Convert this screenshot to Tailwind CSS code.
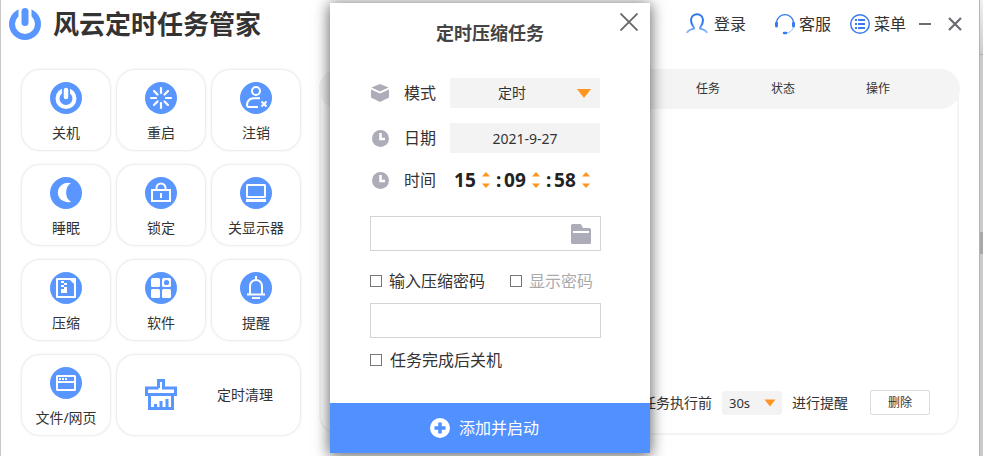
<!DOCTYPE html>
<html lang="zh-CN">
    <head>
        <meta charset="UTF-8">
        <meta name="viewport" content="width=device-width, initial-scale=1.0">
        <title>风云定时任务管家</title>
        <script src="https://cdn.jsdelivr.net/npm/@tailwindcss/browser@4"></script>
    </head>
    <body class="flex min-h-screen bg-white font-['Noto_Sans','Noto_Sans_CJK_SC',sans-serif] text-[#333]">
        <!-- Ventana principal -->
        <div class="relative flex flex-1 flex-col border-l border-[#c8c8c8] pb-[21px]">
            <header class="mb-[21px] flex h-12 items-center pl-2 pr-[17px]">
                <svg class="h-8 w-8" viewBox="0 0 32 32" fill="none">
                    <circle cx="16" cy="16" r="13" stroke="#5a96ff" stroke-width="6"></circle>
                    <path d="M9.500 0H22.500V9H9.500Z" fill="white"></path>
                    <path d="M16 3.500V14.500" stroke="#5a96ff" stroke-width="7" stroke-linecap="round"></path>
                </svg>
                <h1 class="ml-3 text-[26px] leading-8 font-bold">风云定时任务管家</h1>
                <nav class="ml-auto flex items-center text-base leading-6">
                    <a href="#" class="flex items-center gap-1.5">
                        <svg class="h-[22px] w-[22px]" viewBox="0 0 22 22" fill="none" stroke-width="2">
                            <path d="M1 20C2 17 5 16.500 8 15.500C8.500 14 5 12.500 5 7A6 5.800 0 0 1 17 7C17 12.500 13.500 14 14 15.500C17 16.500 20 17 21 20" stroke="url(#user-grad)"></path>
                            <defs>
                                <linearGradient id="user-grad" x1="0" y1="10" x2="0" y2="21" gradientUnits="userSpaceOnUse">
                                    <stop stop-color="#2f76ee"></stop>
                                    <stop offset="1" stop-color="#a5c8ff"></stop>
                                </linearGradient>
                            </defs>
                        </svg>
                        登录
                    </a>
                    <a href="#" class="ml-7 flex items-center gap-[3px]">
                        <svg class="h-[22px] w-[22px]" viewBox="0 0 22 22" fill="none" stroke="#3a7cf0">
                            <path d="M2.500 9A8.600 8.600 0 0 1 19.500 9" stroke-width="1.200"></path>
                            <path d="M2.500 10V13M19.500 10V13" stroke-width="3" stroke-linecap="round"></path>
                            <path d="M19.500 14C18.500 17.500 15.500 20 12 20" stroke="#8db5fa"></path>
                            <path d="M10 20H12" stroke-width="2.500" stroke-linecap="round"></path>
                        </svg>
                        客服
                    </a>
                    <a href="#" class="ml-[18px] flex items-center gap-[3px]">
                        <svg class="h-[22px] w-[22px]" viewBox="0 0 22 22" fill="none" stroke="#3a7cf0">
                            <circle cx="11" cy="11" r="9.300" stroke-width="1.500"></circle>
                            <path d="M6 7H8M6 11H8M6 15H8M9 7H16M9 11H16M9 15H16" stroke-width="2"></path>
                        </svg>
                        菜单
                    </a>
                    <button aria-label="最小化" class="ml-3">
                        <svg class="h-3.5 w-3.5" viewBox="0 0 14 14" stroke="#6f6875" stroke-width="2">
                            <path d="M1 7H13"></path>
                        </svg>
                    </button>
                    <button aria-label="关闭" class="ml-4">
                        <svg class="h-3.5 w-3.5" viewBox="0 0 14 14" stroke="#6f6875" stroke-width="2.200">
                            <path d="M1 1L13 13M13 1L1 13"></path>
                        </svg>
                    </button>
                </nav>
            </header>
            <main class="flex flex-1 pr-[19px] pl-[21px]">
                <!-- Botones de tareas -->
                <div class="grid w-[278px] shrink-0 auto-rows-[80px] grid-cols-3 gap-x-[7px] gap-y-[15px] pt-px text-sm leading-5">
                    <button class="flex flex-col items-center rounded-[18px] pt-3 shadow-[0_0_3px_#cfcfcf]">
                        <svg class="mb-[9px] h-8 w-8" viewBox="0 0 32 32" fill="none">
                            <circle cx="16" cy="16" r="16" fill="#5a96ff"></circle>
                            <circle cx="16" cy="16.500" r="8.500" stroke="white" stroke-width="4"></circle>
                            <path d="M12 4H20V12H12Z" fill="#5a96ff"></path>
                            <path d="M16 8V15" stroke="white" stroke-width="4.500" stroke-linecap="round"></path>
                        </svg>
                        关机
                    </button>
                    <button class="flex flex-col items-center rounded-[18px] pt-3 shadow-[0_0_3px_#cfcfcf]">
                        <svg class="mb-[9px] h-8 w-8" viewBox="0 0 32 32" fill="none">
                            <circle cx="16" cy="16" r="16" fill="#5a96ff"></circle>
                            <path d="M16 6V11M16 21V26M6 16H11M21 16H26M9 9L12.500 12.500M19.500 19.500L23 23M23 9L19.500 12.500M12.500 19.500L9 23" stroke="white" stroke-width="2.200" stroke-linecap="round"></path>
                        </svg>
                        重启
                    </button>
                    <button class="flex flex-col items-center rounded-[18px] pt-3 shadow-[0_0_3px_#cfcfcf]">
                        <svg class="mb-[9px] h-8 w-8" viewBox="0 0 32 32" fill="none" stroke="white" stroke-width="2">
                            <circle cx="16" cy="16" r="16" fill="#5a96ff" stroke="none"></circle>
                            <circle cx="16" cy="9" r="4"></circle>
                            <path d="M20 16.200H13.500C9.500 16.200 7 19.500 7 23C7 24.500 7.500 25 9 25H18"></path>
                            <path d="M21.500 19.500L26.500 24.500M26.500 19.500L21.500 24.500"></path>
                        </svg>
                        注销
                    </button>
                    <button class="flex flex-col items-center rounded-[18px] pt-3 shadow-[0_0_3px_#cfcfcf]">
                        <svg class="mb-[9px] h-8 w-8" viewBox="0 0 32 32">
                            <circle cx="16" cy="16" r="16" fill="#5a96ff"></circle>
                            <path d="M21 6.300A10 9.700 0 1 0 21 24.700C14.500 21.500 14.500 9.500 21 6.300Z" fill="white"></path>
                        </svg>
                        睡眠
                    </button>
                    <button class="flex flex-col items-center rounded-[18px] pt-3 shadow-[0_0_3px_#cfcfcf]">
                        <svg class="mb-[9px] h-8 w-8" viewBox="0 0 32 32" fill="none" stroke="white" stroke-width="2">
                            <circle cx="16" cy="16" r="16" fill="#5a96ff" stroke="none"></circle>
                            <rect x="7" y="13" width="18" height="11"></rect>
                            <path d="M11.500 13V11A4.500 4.500 0 0 1 20.500 11V13M16 16V21"></path>
                        </svg>
                        锁定
                    </button>
                    <button class="flex flex-col items-center rounded-[18px] pt-3 shadow-[0_0_3px_#cfcfcf]">
                        <svg class="mb-[9px] h-8 w-8" viewBox="0 0 32 32" fill="none" stroke="white" stroke-width="2">
                            <circle cx="16" cy="16" r="16" fill="#5a96ff" stroke="none"></circle>
                            <rect x="7" y="8" width="18" height="12" rx="0.500"></rect>
                            <path d="M6 23.500H26" stroke-width="3"></path>
                        </svg>
                        关显示器
                    </button>
                    <button class="flex flex-col items-center rounded-[18px] pt-3 shadow-[0_0_3px_#cfcfcf]">
                        <svg class="mb-[9px] h-8 w-8" viewBox="0 0 32 32" fill="none">
                            <circle cx="16" cy="16" r="16" fill="#5a96ff"></circle>
                            <path d="M7 7H25V25H7Z" stroke="white" stroke-width="2" stroke-linejoin="round"></path>
                            <path d="M19 7H25V13Z" fill="white"></path>
                            <path d="M11 9H14V11H11ZM14 11H17V13H14ZM11 13H14V15H11ZM14 15H17V21H11V17H14Z" fill="white"></path>
                        </svg>
                        压缩
                    </button>
                    <button class="flex flex-col items-center rounded-[18px] pt-3 shadow-[0_0_3px_#cfcfcf]">
                        <svg class="mb-[9px] h-8 w-8" viewBox="0 0 32 32" fill="white">
                            <circle cx="16" cy="16" r="16" fill="#5a96ff"></circle>
                            <rect x="6" y="6" width="9" height="9" rx="1.500"></rect>
                            <rect x="6" y="17" width="9" height="9" rx="1.500"></rect>
                            <rect x="17" y="17" width="9" height="9" rx="1.500"></rect>
                            <rect x="17" y="6" width="9" height="9" rx="1.500"></rect>
                            <circle cx="21.500" cy="10.500" r="2.600" fill="#5a96ff"></circle>
                        </svg>
                        软件
                    </button>
                    <button class="flex flex-col items-center rounded-[18px] pt-3 shadow-[0_0_3px_#cfcfcf]">
                        <svg class="mb-[9px] h-8 w-8" viewBox="0 0 32 32" fill="none" stroke="white" stroke-width="2">
                            <circle cx="16" cy="16" r="16" fill="#5a96ff" stroke="none"></circle>
                            <path d="M10 22V14A6 6 0 0 1 22 14V22M16 4V8M7 22.500H25M12 26H20"></path>
                        </svg>
                        提醒
                    </button>
                    <button class="flex flex-col items-center rounded-[18px] pt-3 shadow-[0_0_3px_#cfcfcf]">
                        <svg class="mb-[9px] h-8 w-8" viewBox="0 0 32 32" fill="none" stroke="white" stroke-width="2">
                            <circle cx="16" cy="16" r="16" fill="#5a96ff" stroke="none"></circle>
                            <rect x="7" y="9" width="18" height="14" rx="0.500"></rect>
                            <path d="M7 15H25"></path>
                            <path d="M9 12H17" stroke-dasharray="2 1"></path>
                        </svg>
                        文件/网页
                    </button>
                    <button class="col-span-2 flex items-center rounded-[18px] pl-7 shadow-[0_0_3px_#cfcfcf]">
                        <svg class="h-8 w-8" viewBox="0 0 32 32" fill="none" stroke="#5a96ff" stroke-width="3">
                            <path d="M13.500 9V1.500H18.500V9H30.500V15.500H1.500V9H13.500"></path>
                            <path d="M4.500 15.500V29.500H27.500V15.500M10.500 29V25M16 29V22M22 29V20"></path>
                        </svg>
                        <span class="ml-10">定时清理</span>
                    </button>
                </div>
                <!-- Lista de tareas -->
                <section class="ml-[19px] flex flex-1 flex-col">
                    <div class="relative rounded-[20px] bg-[#f4f4f4]">
                        <table class="h-10 w-full table-fixed text-left text-xs">
                            <thead>
                                <tr>
                                    <td></td>
                                    <th class="w-[75px] font-normal">任务</th>
                                    <th class="w-[95px] font-normal">状态</th>
                                    <th class="w-[94px] font-normal">操作</th>
                                </tr>
                            </thead>
                        </table>
                    </div>
                    <div class="mr-px -mt-10 flex flex-1 items-end justify-end rounded-[20px] border-2 border-[#f4f4f4] pr-[27px] pb-[18px]">
                        <div class="flex items-center text-sm leading-6">
                            <label for="remind">任务执行前</label>
                            <div class="relative mx-2.5">
                                <select id="remind" class="block h-6 w-[60px] appearance-none rounded-[3px] bg-[#f3f3f3] pl-[7px] text-[13px] leading-6">
                                    <option>30s</option>
                                    <option>60s</option>
                                </select>
                                <svg class="pointer-events-none absolute top-2 right-1.5 h-2 w-3" viewBox="0 0 12 8">
                                    <path d="M0.500 0.500H11.500L6 7.500Z" fill="#ff9420"></path>
                                </svg>
                            </div>
                            <span>进行提醒</span>
                            <button class="ml-[22px] h-[25px] w-[60px] rounded-xs border border-[#dcdcdc] text-xs">删除</button>
                        </div>
                    </div>
                </section>
            </main>

            <!-- Diálogo de compresión -->
            <div role="dialog" aria-labelledby="dialog-title" class="absolute top-[3px] left-1/2 w-80 -translate-x-1/2 bg-white shadow-[0_2px_14px_1px_#00000099]">
                <button aria-label="关闭" class="absolute top-2.5 right-3">
                    <svg class="h-[18px] w-[18px]" viewBox="0 0 18 18" stroke="#666" stroke-width="1.800">
                        <path d="M0.500 0.500L17.500 17.500M17.500 0.500L0.500 17.500"></path>
                    </svg>
                </button>
                <h2 id="dialog-title" class="pt-4 text-center text-lg leading-7 font-bold text-[#444]">定时压缩任务</h2>
                <form class="px-10 pt-[31px] text-base leading-6">
                    <div class="flex items-center">
                        <svg class="h-5 w-5" viewBox="0 0 20 20" fill="#adacb9">
                            <path d="M10 1L18.500 4.500L10 8.500L1.500 4.500Z"></path>
                            <path d="M1 6.500L10 10.500L19 6.500V14.500L10 19L1 14.500Z"></path>
                        </svg>
                        <label for="mode" class="ml-3.5">模式</label>
                        <div class="relative ml-3.5">
                            <select id="mode" class="block h-[30px] w-[150px] appearance-none bg-[#f3f3f3] pr-[26px] text-center text-sm">
                                <option>定时</option>
                                <option>每天</option>
                            </select>
                            <svg class="pointer-events-none absolute top-[11px] right-[9px] h-[9px] w-3.5" viewBox="0 0 14 9">
                                <path d="M0 0H14L7 9Z" fill="#ff9420"></path>
                            </svg>
                        </div>
                    </div>
                    <div class="mt-[15px] flex items-center">
                        <svg class="h-5 w-5" viewBox="0 0 20 20">
                            <circle cx="10.500" cy="10.500" r="8.500" fill="#adacb9"></circle>
                            <path d="M10.500 5V11H15" fill="none" stroke="white" stroke-width="2.500"></path>
                        </svg>
                        <label for="date" class="ml-3.5">日期</label>
                        <input id="date" type="text" value="2021-9-27" class="ml-3.5 h-[30px] w-[150px] bg-[#f3f3f3] text-center text-sm">
                    </div>
                    <div class="mt-3 flex h-[30px] items-center">
                        <svg class="h-5 w-5" viewBox="0 0 20 20">
                            <circle cx="10.500" cy="10.500" r="8.500" fill="#adacb9"></circle>
                            <path d="M10.500 5V11H15" fill="none" stroke="white" stroke-width="2.500"></path>
                        </svg>
                        <label for="hour" class="ml-3.5">时间</label>
                        <div class="ml-[18px] flex items-center text-[19px] font-bold text-[#222]">
                            <input id="hour" type="text" value="15" class="w-6">
                            <svg class="ml-1 h-4 w-2" viewBox="0 0 8 16" fill="#ff9420">
                                <path d="M4 0L8 4.500H0ZM4 16L8 11.500H0Z"></path>
                            </svg>
                            <span class="w-3.5 pl-1.5">:</span>
                            <input type="text" value="09" aria-label="分" class="w-6">
                            <svg class="ml-1 h-4 w-2" viewBox="0 0 8 16" fill="#ff9420">
                                <path d="M4 0L8 4.500H0ZM4 16L8 11.500H0Z"></path>
                            </svg>
                            <span class="w-3.5 pl-1.5">:</span>
                            <input type="text" value="58" aria-label="秒" class="w-6">
                            <svg class="ml-1 h-4 w-2" viewBox="0 0 8 16" fill="#ff9420">
                                <path d="M4 0L8 4.500H0ZM4 16L8 11.500H0Z"></path>
                            </svg>
                        </div>
                    </div>
                    <div class="mt-[21px] mr-[9px] flex h-[35px] items-center border border-[#d4d4d4] pr-2">
                        <input type="text" aria-label="文件路径" class="min-w-0 flex-1 px-2 text-sm">
                        <button type="button" aria-label="选择文件夹">
                            <svg class="block h-5 w-[22px]" viewBox="0 0 22 20" fill="#adacb9">
                                <path d="M1 1.500Q1 0 2.500 0H10Q11 0 11.500 1L13 4H19.500Q21 4 21 5.500V18.500Q21 20 19.500 20H2.500Q1 20 1 18.500Z"></path>
                                <path d="M3 7H19V9H3Z" fill="white"></path>
                            </svg>
                        </button>
                    </div>
                    <div class="mt-[18px] flex items-center">
                        <label class="flex items-center gap-[7px]">
                            <input type="checkbox" class="h-3 w-3 appearance-none border border-[#777] checked:bg-[#5090ff]">
                            输入压缩密码
                        </label>
                        <label class="ml-[25px] flex items-center gap-[7px] text-[#aaa]">
                            <input type="checkbox" class="h-3 w-3 appearance-none border border-[#777] checked:bg-[#5090ff]">
                            显示密码
                        </label>
                    </div>
                    <div class="mt-2.5 mr-[9px] flex">
                        <input type="password" aria-label="压缩密码" class="h-[35px] w-full border border-[#d4d4d4] px-2 text-sm">
                    </div>
                    <label class="mt-2.5 flex items-center gap-2">
                        <input type="checkbox" class="h-3 w-3 appearance-none border border-[#777] checked:bg-[#5090ff]">
                        任务完成后关机
                    </label>
                </form>
                <button class="mt-[31px] flex h-[50px] w-full items-center justify-center gap-[9px] bg-[#5090ff] pr-[11px] text-base leading-6 text-white">
                    <svg class="h-5 w-5" viewBox="0 0 20 20">
                        <circle cx="10" cy="10" r="10" fill="white"></circle>
                        <path d="M10 4.500V15.500M4.500 10H15.500" stroke="#5090ff" stroke-width="3.500"></path>
                    </svg>
                    添加并启动
                </button>
            </div>
        </div>
        <!-- Borde derecho -->
        <div class="flex w-1 flex-col border-l border-[#b4b4b4] bg-[#cbcbcb]">
            <div class="h-[55px] border-b border-[#aaa] bg-linear-to-b from-[#f0f0f0] to-[#cbcbcb]"></div>
            <div class="mt-[177px] h-[22px] bg-[#a8a8a8]"></div>
        </div>
    </body>
</html>
